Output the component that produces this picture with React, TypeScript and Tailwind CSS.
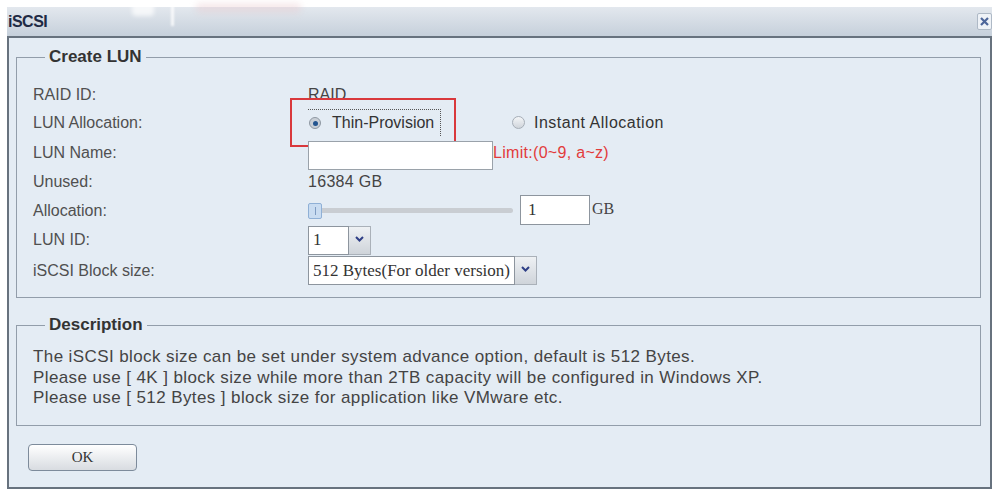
import React from "react";

const sans = "font-['Liberation_Sans',Arial,sans-serif]";
const serif = "font-['Liberation_Serif','Times_New_Roman',serif]";

function Chevron() {
  return (
    <svg width="9" height="6" viewBox="0 0 9 6" className="mt-[9px]">
      <polyline points="1,1 4.5,4.5 8,1" fill="none" stroke="#2f3f86" strokeWidth="2" />
    </svg>
  );
}

function SelectBox({ width, value }: { width: number; value: string }) {
  return (
    <div className="flex h-[29px]">
      <div
        className={`flex items-center border border-[#8d959e] bg-white pl-[4px] text-[17px] text-[#333] ${serif}`}
        style={{ width }}
      >
        {value}
      </div>
      <div className="flex w-[22px] justify-center border border-l-0 border-[#aab1b9] bg-gradient-to-b from-[#eef1f4] to-[#cfd4da]">
        <Chevron />
      </div>
    </div>
  );
}

function Row({ label, h, children }: { label: string; h: string; children?: React.ReactNode }) {
  return (
    <div className={`relative flex items-center ${h}`}>
      <div className="w-[275px] shrink-0 text-[#505050]">{label}</div>
      <div className="flex items-center">{children}</div>
    </div>
  );
}

export default function App() {
  return (
    <div className={`relative h-[492px] w-[998px] overflow-hidden bg-white pl-[7px] pr-[6px] pt-[7px] ${sans}`}>
      {/* faded background behind title bar */}
      <div className="absolute left-[132px] top-0 h-[16px] w-[22px] rounded-sm bg-white/70 blur-[2px]" />
      <div className="absolute left-[171px] top-0 h-[26px] w-[3px] bg-white/80 blur-[1px]" />
      <div className="absolute left-[196px] top-[3px] h-[10px] w-[105px] rounded bg-[#e8c8cc]/40 blur-[3px]" />

      <div className="flex h-[29px] items-center justify-between bg-gradient-to-b from-[#e3e8ee] to-[#c6d0db] pl-[1px]">
        <span className="text-[16px] font-bold tracking-[-0.5px] text-[#1f2a44]">iSCSI</span>
        <div className="flex h-[17px] w-[15px] items-center justify-center rounded-[2px] border border-[#aeb9c6] bg-[#eef2f7]">
          <svg width="9" height="9" viewBox="0 0 9 9">
            <path d="M1 1 L8 8 M8 1 L1 8" stroke="#4d669a" strokeWidth="2.2" />
          </svg>
        </div>
      </div>

      <div className="h-[453px] border-2 border-[#67727e] bg-[#e4ecf4] pl-[7px] pr-[9px]">
        <fieldset className="mt-[9px] border border-[#929daa] pb-[11px] pl-[16px] pt-[14px] text-[16px]">
          <legend className="ml-[12px] px-[4px] text-[17px] font-bold leading-[20px] text-[#333]">
            Create LUN
          </legend>

          <Row label="RAID ID:" h="h-[27px]">
            <span className="text-[#444]">RAID</span>
          </Row>

          <Row label="LUN Allocation:" h="h-[29px]">
            <div className="absolute left-[257px] top-[-10px] h-[49px] w-[166px] border-2 border-[#d9383c]" />
            <div className="flex h-[27px] w-[133px] items-center border-r border-t border-dotted border-[#555]">
              <span className="ml-[1px] flex h-[12px] w-[12px] items-center justify-center rounded-full border border-[#8f98a2] bg-[#c9cfd6]">
                <span className="h-[5px] w-[5px] rounded-full bg-[#24558f]" />
              </span>
              <span className="ml-[11px] text-[#333]">Thin-Provision</span>
            </div>
            <div className="ml-[71px] flex items-center">
              <span className="h-[13px] w-[13px] rounded-full border border-[#a6aeb7] bg-gradient-to-b from-[#f4f6f8] to-[#d0d5db]" />
              <span className="ml-[9px] tracking-[0.5px] text-[#333]">Instant Allocation</span>
            </div>
          </Row>

          <Row label="LUN Name:" h="h-[31px]">
            <div className="mt-[5px] h-[29px] w-[185px] border border-[#9aa2aa] bg-white" />
            <span className="tracking-[0.3px] text-[#e23b3b]">Limit:(0~9, a~z)</span>
          </Row>

          <Row label="Unused:" h="h-[28px]">
            <span className="tracking-[0.3px] text-[#444]">16384 GB</span>
          </Row>

          <Row label="Allocation:" h="h-[29px]">
            <div className="relative flex h-[16px] w-[205px] items-center">
              <div className="h-[5px] w-full rounded-full bg-[#c9cdd2]" />
              <div className="absolute left-0 top-0 flex h-[16px] w-[14px] items-center justify-center rounded-[2px] border border-[#8fb0d6] bg-[#c9dcf1]">
                <span className="h-[8px] w-px bg-[#7f9cc2]" />
              </div>
            </div>
            <div className={`ml-[7px] mt-[-2px] flex h-[30px] w-[70px] items-center border border-[#8d959e] bg-white pl-[7px] text-[17px] text-[#333] ${serif}`}>
              1
            </div>
            <span className={`ml-[2px] mt-[-4px] text-[16px] text-[#444] ${serif}`}>GB</span>
          </Row>

          <Row label="LUN ID:" h="h-[30px]">
            <SelectBox width={41} value="1" />
          </Row>

          <Row label="iSCSI Block size:" h="h-[31px]">
            <SelectBox width={207} value="512 Bytes(For older version)" />
          </Row>
        </fieldset>

        <fieldset className="mt-[17px] border border-[#929daa] pb-[16px] pl-[16px] pt-[12px] text-[17px] leading-[20.5px] tracking-[0.4px] text-[#444]">
          <legend className="ml-[12px] px-[4px] text-[17px] font-bold leading-[20px] tracking-normal text-[#333]">
            Description
          </legend>
          <p>The iSCSI block size can be set under system advance option, default is 512 Bytes.</p>
          <p>Please use [ 4K ] block size while more than 2TB capacity will be configured in Windows XP.</p>
          <p>Please use [ 512 Bytes ] block size for application like VMware etc.</p>
        </fieldset>

        <button
          className={`ml-[12px] mt-[18px] h-[27px] w-[109px] rounded-[4px] border border-[#7d8b9b] bg-gradient-to-b from-white to-[#d8dce1] text-[15px] text-[#333] ${serif}`}
        >
          OK
        </button>
      </div>
    </div>
  );
}
